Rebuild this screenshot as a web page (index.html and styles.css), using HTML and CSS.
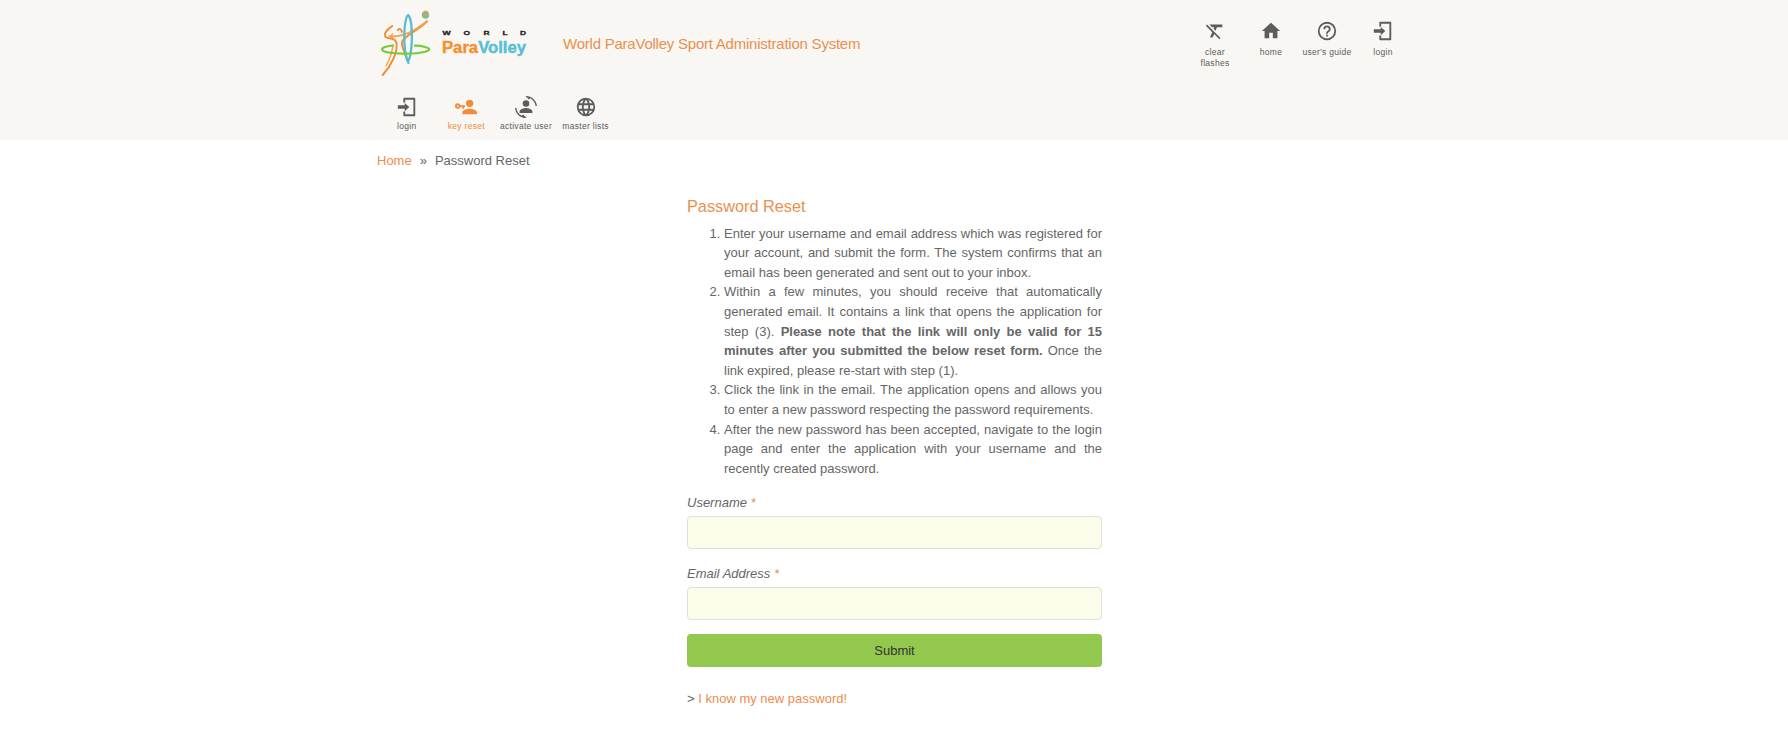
FILE: index.html
```html
<!DOCTYPE html>
<html lang="en">
<head>
<meta charset="utf-8">
<title>Password Reset</title>
<link rel="stylesheet" href="styles.css">
</head>
<body>
<header class="header">
  <div class="container">
    <div class="top">
      <svg class="logo" width="153" height="82" viewBox="0 0 153 82" role="img" aria-label="World ParaVolley">
        <g fill="none" stroke-linecap="round" stroke-linejoin="round">
          <path d="M15.300 26C11 29 7 32 8 36C9 40 18 36 19.500 43C21 52 14 66 5.700 75" stroke="#f08c32" stroke-width="1.900"/>
          <path d="M15.500 34C12.500 37 15 37 18 40" stroke="#f5a04b" stroke-width="1.500"/>
          <path d="M30 60C28 52 24 46 25 42C27 36 40 31 50 21.500" stroke="#f08c32" stroke-width="1.900"/>
          <path d="M12 36C25 38 38 31 50 21" stroke="#f5a04b" stroke-width="1.700"/>
          <path d="M20.700 30q3-3 4.300 2" stroke="#f08c32" stroke-width="1.800"/>
          <path d="M16 45C15 53 13 59 9 66" stroke="#f5a04b" stroke-width="1.400"/>
          <path d="M31.500 63C25 49 27 19 31 15C36 19 36 48 32 60" stroke="#58bdcf" stroke-width="2.300"/>
          <path d="M16 45.500C0 47 1 52.500 22 53.500C45 54.500 60 50 48 47C45 46 42 45.700 38 45.700" stroke="#77cc35" stroke-width="2.200"/>
        </g>
        <circle cx="48.500" cy="15" r="3.700" fill="#72be9b"/>
        <path d="M46 13Q48 10 51 12M46 17Q49 13 52 15" fill="none" stroke="#f3a14c" stroke-width="1.200"/>
        <g class="logo-world">
          <text transform="translate(65.500 34.800) scale(1.450 1)">W</text>
          <text transform="translate(86.500 34.800) scale(1.400 1)">O</text>
          <text transform="translate(106.500 34.800) scale(1.400 1)">R</text>
          <text transform="translate(125.500 34.800) scale(1.400 1)">L</text>
          <text transform="translate(143 34.800) scale(1.400 1)">D</text>
        </g>
        <text class="logo-name" x="65" y="52.500" textLength="84" lengthAdjust="spacingAndGlyphs"><tspan class="para">Para</tspan><tspan class="volley">Volley</tspan></text>
      </svg>
      <div class="app-name">World ParaVolley Sport Administration System</div>
      <nav class="tools">
        <a class="item"><svg class="icon" viewBox="0 0 24 24"><path d="M6,5V5.180L8.820,8H11.220L10.500,9.680L12.600,11.780L14.210,8H20V5H6M3.270,5L2,6.270L8.970,13.240L6.500,19H9.500L11.070,15.340L16.730,21L18,19.730L3.550,5.270L3.270,5Z"/></svg><span>clear flashes</span></a>
        <a class="item"><svg class="icon" viewBox="0 0 24 24"><path d="M10,20V14H14V20H19V12H22L12,3L2,12H5V20H10Z"/></svg><span>home</span></a>
        <a class="item"><svg class="icon" viewBox="0 0 24 24"><path d="M11,18H13V16H11V18M12,2A10,10 0 0,0 2,12A10,10 0 0,0 12,22A10,10 0 0,0 22,12A10,10 0 0,0 12,2M12,20C7.590,20 4,16.410 4,12C4,7.590 7.590,4 12,4C16.410,4 20,7.590 20,12C20,16.410 16.410,20 12,20M12,6A4,4 0 0,0 8,10H10A2,2 0 0,1 12,8A2,2 0 0,1 14,10C14,12 11,11.750 11,15H13C13,12.750 16,12.500 16,10A4,4 0 0,0 12,6Z"/></svg><span>user's guide</span></a>
        <a class="item"><svg class="icon" viewBox="0 0 24 24"><path d="M9,7V3H20V21H9V17" fill="none" stroke="currentColor" stroke-width="2" stroke-linejoin="round"/><path d="M9.500,16.500V13.800H2V10.200H9.500V7.500L14.500,12Z"/></svg><span>login</span></a>
      </nav>
    </div>
    <nav class="menu">
      <a class="item"><svg class="icon" viewBox="0 0 24 24"><path d="M9,7V3H20V21H9V17" fill="none" stroke="currentColor" stroke-width="2" stroke-linejoin="round"/><path d="M9.500,16.500V13.800H2V10.200H9.500V7.500L14.500,12Z"/></svg><span>login</span></a>
      <a class="item active"><svg class="icon" viewBox="0 0 24 24"><path d="M11,10V12H10V14H8V12H5.830C5.420,13.170 4.310,14 3,14A3,3 0 0,1 0,11A3,3 0 0,1 3,8C4.310,8 5.420,8.830 5.830,10H11M3,10A1,1 0 0,0 2,11A1,1 0 0,0 3,12A1,1 0 0,0 4,11A1,1 0 0,0 3,10M16,14C18.670,14 24,15.340 24,18V20H8V18C8,15.340 13.330,14 16,14M16,12A4,4 0 0,1 12,8A4,4 0 0,1 16,4A4,4 0 0,1 20,8A4,4 0 0,1 16,12Z"/></svg><span>key reset</span></a>
      <a class="item"><svg class="icon" viewBox="0 0 24 24"><path d="M7.500,21.500L8.850,20.160L12.660,23.970L12,24C5.710,24 0.560,19.160 0.050,13H1.550C1.910,16.760 4.250,19.940 7.500,21.500M16.500,2.500L15.150,3.840L11.340,0.030L12,0C18.290,0 23.440,4.840 23.950,11H22.450C22.090,7.240 19.750,4.070 16.500,2.500M5,17C5,14.500 10,13.200 12,13.200C14,13.200 19,14.500 19,17V18.500H5V17M15.600,8.200A3.600,3.600 0 0,1 12,11.800A3.600,3.600 0 0,1 8.400,8.200A3.600,3.600 0 0,1 12,4.600A3.600,3.600 0 0,1 15.600,8.200Z"/></svg><span>activate user</span></a>
      <a class="item"><svg class="icon" viewBox="0 0 24 24"><path d="M16.360,14C16.440,13.340 16.500,12.680 16.500,12C16.500,11.320 16.440,10.660 16.360,10H19.740C19.900,10.640 20,11.310 20,12C20,12.690 19.900,13.360 19.740,14M14.590,19.560C15.190,18.450 15.650,17.250 15.970,16H18.920C17.960,17.650 16.430,18.930 14.590,19.560M14.340,14H9.660C9.560,13.340 9.500,12.680 9.500,12C9.500,11.320 9.560,10.650 9.660,10H14.340C14.430,10.650 14.500,11.320 14.500,12C14.500,12.680 14.430,13.340 14.340,14M12,19.960C11.170,18.760 10.500,17.430 10.090,16H13.910C13.500,17.430 12.830,18.760 12,19.960M8,8H5.080C6.030,6.340 7.570,5.060 9.400,4.440C8.800,5.550 8.350,6.750 8,8M5.080,16H8C8.350,17.250 8.800,18.450 9.400,19.560C7.570,18.930 6.030,17.650 5.080,16M4.260,14C4.100,13.360 4,12.690 4,12C4,11.310 4.100,10.640 4.260,10H7.640C7.560,10.660 7.500,11.320 7.500,12C7.500,12.680 7.560,13.340 7.640,14M12,4.030C12.830,5.230 13.500,6.570 13.910,8H10.090C10.500,6.570 11.170,5.230 12,4.030M18.920,8H15.970C15.650,6.750 15.190,5.550 14.590,4.440C16.430,5.070 17.960,6.340 18.920,8M12,2C6.470,2 2,6.500 2,12A10,10 0 0,0 12,22A10,10 0 0,0 22,12A10,10 0 0,0 12,2Z"/></svg><span>master lists</span></a>
    </nav>
  </div>
</header>
<main class="container">
  <div class="breadcrumb"><a class="link">Home</a><span class="separator">»</span><span>Password Reset</span></div>
  <section class="panel">
    <h1 class="heading">Password Reset</h1>
    <ol class="steps">
      <li>Enter your username and email address which was registered for your account, and submit the form. The system confirms that an email has been generated and sent out to your inbox.</li>
      <li>Within a few minutes, you should receive that automatically generated email. It contains a link that opens the application for step (3). <strong>Please note that the link will only be valid for 15 minutes after you submitted the below reset form.</strong> Once the link expired, please re-start with step (1).</li>
      <li>Click the link in the email. The application opens and allows you to enter a new password respecting the password requirements.</li>
      <li>After the new password has been accepted, navigate to the login page and enter the application with your username and the recently created password.</li>
    </ol>
    <form class="form">
      <label class="label" for="username">Username <span class="required">*</span></label>
      <input class="input" id="username" type="text">
      <label class="label" for="email">Email Address <span class="required">*</span></label>
      <input class="input" id="email" type="text">
      <button class="submit" type="button">Submit</button>
    </form>
    <p class="more">&gt; <a class="link">I know my new password!</a></p>
  </section>
</main>
</body>
</html>
```
FILE: styles.css
```css
* { box-sizing: border-box; }
body {
  margin: 0;
  background: #fff;
  color: #666;
  font: 13px/19.6px "Liberation Sans", Arial, sans-serif;
}
.container { width: 1034px; margin: 0 auto; }
.header { height: 140px; background: #f8f7f3; }
.top { display: flex; height: 92px; }
.logo { display: block; flex: none; }
.logo-world { font: bold 6px "Liberation Sans", Arial, sans-serif; fill: #222; stroke: #222; stroke-width: .3px; }
.logo-name { font: bold 16px "Liberation Sans", Arial, sans-serif; }
.para { fill: #f7902f; stroke: #f7902f; stroke-width: .4px; }
.volley { fill: #56bfd2; stroke: #56bfd2; stroke-width: .4px; }
.app-name {
  padding: 34px 0 0 33px;
  color: #ea9050;
  font-size: 15px;
  letter-spacing: -.23px;
  white-space: nowrap;
}
.tools { display: flex; margin-left: auto; padding-top: 21px; }
.menu { display: flex; padding-top: 4px; }
.item {
  display: flex;
  flex-direction: column;
  align-items: center;
  width: 56px;
  color: #5c5c5c;
  font-size: 8.5px;
  line-height: 11px;
  letter-spacing: .3px;
  text-align: center;
}
.item span { padding-top: 3px; margin: 0 -6px; }
.tools .item span { padding-top: 4px; }
.tools .item:first-child span { width: 46px; margin: 0; }
.menu .item { width: 59.6px; white-space: nowrap; }
.item.active { color: #f08c3c; }
.icon { width: 22px; height: 22px; fill: currentColor; }
.tools .icon { margin-top: -1px; }
.tools .item span { padding-top: 5px; }
.breadcrumb { padding-top: 11px; }
.separator { margin: 0 8px; }
.link { color: #ee8c50; }
.panel { width: 415px; margin: 24px 0 0 310px; }
.heading {
  margin: 0;
  color: #ea9050;
  font-size: 16.3px;
  font-weight: normal;
  line-height: 22px;
}
.steps { margin: 7px 0 0; padding-left: 37px; text-align: justify; }
.form { display: flex; flex-direction: column; }
.label { margin: 15px 0 3px; font-style: italic; }
.required { color: #ee8c50; }
.input {
  width: 100%;
  height: 33px;
  border: 1px solid #dcdfdc;
  border-radius: 4px;
  background: #fbfdea;
}
.submit {
  height: 33px;
  margin-top: 14px;
  border: 0;
  border-radius: 4px;
  background: #91c84d;
  color: #333;
  font: 13px "Liberation Sans", Arial, sans-serif;
}
.more { margin: 22px 0 0; }
```
